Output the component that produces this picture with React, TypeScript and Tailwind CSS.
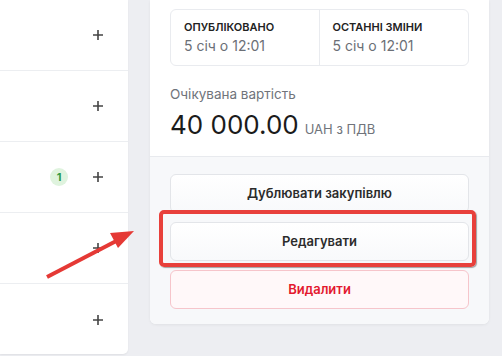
import React from 'react';

const rows = [{ badge: 0 }, { badge: 0 }, { badge: 1 }, { badge: 0 }, { badge: 0 }];

function PlusIcon() {
  return (
    <svg width="12" height="12" viewBox="0 0 12 12" className="text-[#444]">
      <path d="M6 1v10M1 6h10" stroke="currentColor" strokeWidth="1.6" />
    </svg>
  );
}

export default function App() {
  return (
    <main
      className="relative w-[502px] h-[356px] overflow-hidden bg-[#edeef2] flex"
      style={{ fontFamily: 'Inter, "Noto Sans", sans-serif' }}
    >
      {/* left list */}
      <div className="w-[128px] h-[354px] bg-white rounded-br-[5px] shadow-[0_1px_2px_rgba(0,0,0,0.06)] flex flex-col">
        {rows.map((r, i) => (
          <div
            key={i}
            className={`h-[71px] shrink-0 flex items-center justify-end pr-[24px] gap-[24px] ${i < rows.length - 1 ? 'border-b border-[#eceef1]' : ''}`}
          >
            {r.badge > 0 && (
              <span className="w-[18px] h-[18px] rounded-full bg-[#dff3de] text-[#2f9a47] text-[11px] font-bold flex items-center justify-center">
                {r.badge}
              </span>
            )}
            <PlusIcon />
          </div>
        ))}
      </div>

      {/* right card */}
      <div className="ml-[22px] w-[339px] h-[324px] bg-white rounded-b-[6px] shadow-[0_1px_3px_rgba(0,0,0,0.06)] flex flex-col overflow-hidden">
        <div className="px-[20px] pt-[9px] h-[157px] border-b border-[#e8eaee]">
          <div className="grid grid-cols-2 h-[57px] border border-[#e9ebef] rounded-[6px]">
            <div className="pl-[13px] pt-[10px] border-r border-[#e9ebef]">
              <div className="text-[11px] font-semibold text-[#222] leading-[14px]">ОПУБЛІКОВАНО</div>
              <div className="text-[14px] text-[#6b6f76] leading-[18px] mt-[3px]">5 січ о 12:01</div>
            </div>
            <div className="pl-[13px] pt-[10px]">
              <div className="text-[11px] font-semibold text-[#222] leading-[14px]">ОСТАННІ ЗМІНИ</div>
              <div className="text-[14px] text-[#6b6f76] leading-[18px] mt-[3px]">5 січ о 12:01</div>
            </div>
          </div>
          <div className="mt-[19px] text-[13.5px] text-[#70747b] leading-[18px]">Очікувана вартість</div>
          <div className="mt-[7px] flex items-baseline gap-[6px]">
            <span className="text-[26px] text-[#1b1b1b] leading-[30px]">40 000.00</span>
            <span className="text-[13px] text-[#70747b]">UAH з ПДВ</span>
          </div>
        </div>

        <div className="flex-1 bg-[#f7f8fa] px-[20px] pt-[17px] flex flex-col gap-[9px]">
          <button className="h-[39px] rounded-[6px] border border-[#e3e5e9] bg-gradient-to-b from-white to-[#f8f9fb] text-[13px] font-semibold text-[#2b2b2b]">
            Дублювати закупівлю
          </button>
          <button className="h-[39px] rounded-[6px] border border-[#e3e5e9] bg-gradient-to-b from-white to-[#f8f9fb] text-[13px] font-semibold text-[#2b2b2b]">
            Редагувати
          </button>
          <button className="h-[39px] rounded-[6px] border border-[#f6c5cb] bg-[#fff8f9] text-[13px] font-semibold text-[#e3192e]">
            Видалити
          </button>
        </div>
      </div>

      {/* annotation highlight */}
      <div className="absolute left-[159px] top-[210px] w-[317px] h-[57px] border-[4px] border-[#e8403b] rounded-[5px] shadow-[1px_1px_1px_rgba(0,0,0,0.35)] pointer-events-none" />

      {/* annotation arrow */}
      <svg className="absolute left-0 top-0 pointer-events-none" width="502" height="356">
        <line x1="47" y1="277" x2="122" y2="238" stroke="#e53935" strokeWidth="4" strokeLinecap="butt" />
        <polygon points="134,231 110,233 118,248" fill="#e53935" />
      </svg>
    </main>
  );
}
